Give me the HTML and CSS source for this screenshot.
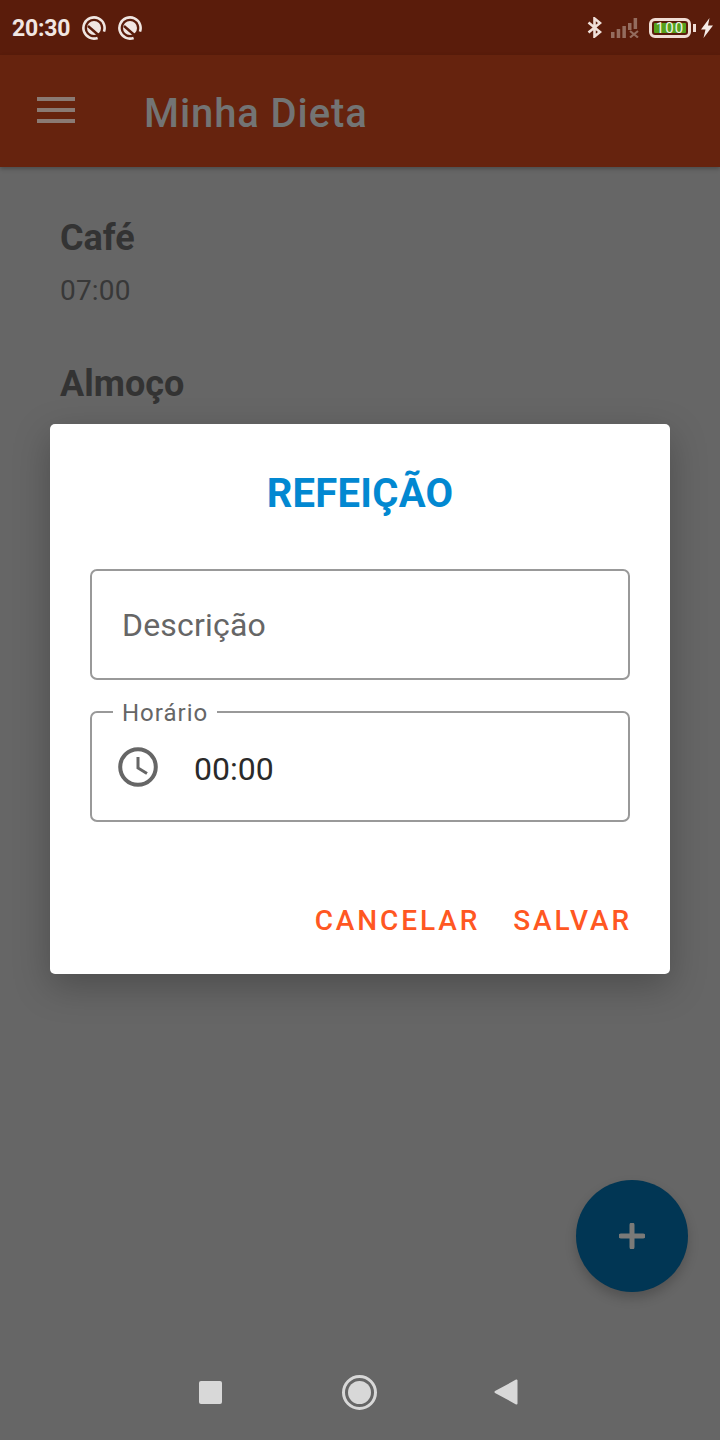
FILE: index.html
```html
<!DOCTYPE html>
<html>
<head>
    <meta charset="utf-8">
    <title>Minha Dieta</title>
    <link rel="stylesheet" href="styles.css">
</head>
<body>
    <div class="status-bar">
        <span class="clock">20:30</span>
        <svg class="dnd" viewBox="0 0 24 24"><circle cx="12" cy="12" r="10.6" fill="none" stroke="#f0e6e2" stroke-width="2.6" stroke-dasharray="57 9.6" transform="rotate(70 12 12)"/><circle cx="12" cy="12" r="7" fill="#f0e6e2"/><path d="M6 10 L17.5 20" stroke="#5a1c0b" stroke-width="2.4"/></svg>
        <svg class="dnd" viewBox="0 0 24 24"><circle cx="12" cy="12" r="10.6" fill="none" stroke="#f0e6e2" stroke-width="2.6" stroke-dasharray="57 9.6" transform="rotate(70 12 12)"/><circle cx="12" cy="12" r="7" fill="#f0e6e2"/><path d="M6 10 L17.5 20" stroke="#5a1c0b" stroke-width="2.4"/></svg>
        <span class="spacer"></span>
        <svg class="bluetooth" viewBox="0 0 15 21"><path d="M1.5 5.5 L13 15 L7.5 19.5 V1.5 L13 6 L1.5 15.5" fill="none" stroke="#f0e0da" stroke-width="2.6"/></svg>
        <svg class="signal" viewBox="0 0 28 20"><path d="M0 14h3.5v6H0z M5.7 11h3.5v9H5.7z M11.4 8h3.5v12h-3.5z M17 5h3.5v7H17z M22.6 0h3.5v11h-3.5z" fill="#946c5e"/><path d="M19 13l8 6.5 M27 13l-8 6.5" stroke="#946c5e" stroke-width="2.2"/></svg>
        <div class="battery">
            <div class="battery-body"><span class="battery-level">100</span></div>
            <span class="battery-tip"></span>
        </div>
        <svg class="bolt" viewBox="0 0 12 20"><path d="M8.5 0 L0 11.5 H4.5 L2.5 20 L12 7.5 H7 Z" fill="#f5ebe7"/></svg>
    </div>

    <div class="app-bar">
        <div class="menu-icon"><span></span><span></span><span></span></div>
        <h1 class="app-title">Minha Dieta</h1>
    </div>

    <main class="content">
        <div class="meal">
            <div class="meal-name">Café</div>
            <div class="meal-time">07:00</div>
        </div>
        <div class="meal">
            <div class="meal-name">Almoço</div>
        </div>

        <button class="fab">
            <svg viewBox="0 0 26 26"><path d="M13 2 V24 M2 13 H24" stroke="#7a7a78" stroke-width="5" stroke-linecap="round"/></svg>
        </button>

        <div class="overlay">
            <form class="dialog">
                <h2 class="dialog-title">REFEIÇÃO</h2>
                <div class="field">
                    <span class="placeholder">Descrição</span>
                </div>
                <div class="field">
                    <span class="field-label">Horário</span>
                    <svg class="clock-icon" viewBox="0 0 40 40"><circle cx="20" cy="20" r="17.8" fill="none" stroke="#666" stroke-width="4"/><path d="M20 10 V21 L29 26.5" fill="none" stroke="#666" stroke-width="3"/></svg>
                    <span class="field-value">00:00</span>
                </div>
                <div class="button-group">
                    <button type="button" class="text-button">CANCELAR</button>
                    <button type="button" class="text-button">SALVAR</button>
                </div>
            </form>
        </div>
    </main>

    <div class="nav-bar">
        <span class="nav-square"></span>
        <span class="nav-circle"></span>
        <svg class="nav-back" viewBox="0 0 24 26"><path d="M22.5 1.5 V24.5 L1.5 13 Z" fill="#d8d8d8" stroke="#d8d8d8" stroke-width="2" stroke-linejoin="round"/></svg>
    </div>
</body>
</html>
```

FILE: styles.css
```css
* {
    box-sizing: border-box;
}

html, body {
    margin: 0;
    height: 1440px;
}

body {
    display: flex;
    flex-direction: column;
    background-color: #666666;
    font-family: Roboto, sans-serif;
    overflow: hidden;
}

/* status bar */
.status-bar {
    display: flex;
    align-items: center;
    height: 55px;
    padding: 0 7px 0 12px;
    background-color: #5a1c0b;
}

.clock {
    margin-top: 1px;
    margin-right: 12px;
    font-size: 23px;
    font-weight: 700;
    letter-spacing: -0.2px;
    color: #f0e6e2;
}

.dnd {
    width: 24px;
    height: 24px;
    margin-right: 12px;
}

.spacer {
    flex: 1;
}

.bluetooth {
    width: 15px;
    height: 21px;
    margin-right: 9px;
}

.signal {
    width: 28px;
    height: 20px;
    margin-right: 10px;
}

.battery {
    display: flex;
    align-items: center;
    margin-right: 5px;
}

.battery-body {
    width: 42px;
    height: 20px;
    padding: 2px;
    border: 3px solid #f0dcd4;
    border-radius: 6px;
}

.battery-level {
    display: block;
    height: 100%;
    border-radius: 1px;
    background-color: #55a01c;
    color: #eef2e8;
    font-size: 15px;
    line-height: 10px;
    letter-spacing: 1px;
    text-align: center;
}

.battery-tip {
    width: 3px;
    height: 8px;
    margin-left: 2px;
    background-color: #f0dcd4;
}

.bolt {
    width: 12px;
    height: 20px;
}

/* app bar */
.app-bar {
    display: flex;
    align-items: center;
    height: 112px;
    padding: 5px 37px 0;
    background-color: #66230e;
    box-shadow: 0 2px 4px rgba(0, 0, 0, 0.25);
    position: relative;
    z-index: 1;
}

.menu-icon {
    display: flex;
    flex-direction: column;
    gap: 7px;
    width: 38px;
    margin-top: -7px;
    margin-right: 69px;
}

.menu-icon span {
    height: 4px;
    background-color: #8a7a74;
}

.app-title {
    margin: 0;
    font-size: 40px;
    font-weight: 500;
    letter-spacing: 0.9px;
    color: #737474;
}

/* list */
.content {
    flex: 1;
    position: relative;
    padding: 51px 60px 0;
}

.meal {
    margin-bottom: 53px;
}

.meal-name {
    font-size: 36px;
    line-height: 40px;
    font-weight: 700;
    color: #333333;
}

.meal-time {
    margin-top: 13px;
    font-size: 28px;
    line-height: 40px;
    letter-spacing: 0.2px;
    color: #383838;
}

.fab {
    position: absolute;
    right: 32px;
    bottom: 52px;
    display: flex;
    align-items: center;
    justify-content: center;
    width: 112px;
    height: 112px;
    padding: 0;
    border: none;
    border-radius: 50%;
    background-color: #013654;
    box-shadow: 0 6px 12px rgba(0, 0, 0, 0.2);
}

.fab svg {
    width: 26px;
    height: 26px;
}

/* dialog */
.overlay {
    position: absolute;
    top: 257px;
    left: 50px;
    right: 50px;
}

.dialog {
    height: 550px;
    padding: 41px 40px 0;
    border-radius: 5px;
    background-color: #ffffff;
    box-shadow: 0 12px 36px rgba(0, 0, 0, 0.25);
}

.dialog-title {
    margin: 0 0 46px;
    font-size: 40px;
    line-height: 58px;
    font-weight: 700;
    letter-spacing: 0.25px;
    color: #0288d1;
    text-align: center;
}

.field {
    position: relative;
    display: flex;
    align-items: center;
    height: 111px;
    margin-bottom: 31px;
    padding: 0 30px 0 26px;
    border: 2px solid #999999;
    border-radius: 7px;
}

.placeholder {
    margin-left: 4px;
    font-size: 32px;
    letter-spacing: 0.2px;
    color: #666666;
}

.field-label {
    position: absolute;
    top: -13px;
    left: 21px;
    padding: 0 9px;
    background-color: #ffffff;
    font-size: 24px;
    line-height: 26px;
    letter-spacing: 1px;
    color: #666666;
}

.clock-icon {
    width: 40px;
    height: 40px;
}

.field-value {
    margin-top: 4px;
    margin-left: 36px;
    font-size: 32px;
    color: #2a2a2a;
}

.button-group {
    display: flex;
    justify-content: flex-end;
    gap: 33px;
    margin-top: 82px;
    margin-right: -2px;
}

.text-button {
    padding: 0;
    border: none;
    background: none;
    font-family: inherit;
    font-size: 28px;
    font-weight: 500;
    letter-spacing: 2.9px;
    color: #ff5722;
}

/* nav bar */
.nav-bar {
    display: flex;
    align-items: center;
    justify-content: center;
    height: 96px;
    padding-right: 3px;
}

.nav-square {
    width: 23px;
    height: 23px;
    border-radius: 2px;
    background-color: #d8d8d8;
}

.nav-circle {
    width: 35px;
    height: 35px;
    margin-left: 120px;
    padding: 3px;
    border: 3px solid #d8d8d8;
    border-radius: 50%;
    background-color: #d8d8d8;
    background-clip: content-box;
}

.nav-back {
    width: 24px;
    height: 26px;
    margin-left: 117px;
}
```
